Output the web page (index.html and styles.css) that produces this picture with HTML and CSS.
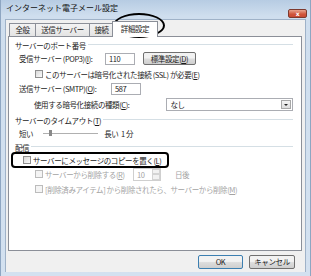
FILE: index.html
```html
<!DOCTYPE html>
<html lang="ja">
<head>
    <meta charset="UTF-8">
    <title>インターネット電子メール設定</title>
    <link rel="stylesheet" href="styles.css">
</head>
<body>
    <div class="window">
        <div class="titlebar">
            <span class="title">インターネット電子メール設定</span>
            <span class="close">x</span>
        </div>
        <div class="client">
            <div class="tabs">
                <div class="tab tab-general">全般</div>
                <div class="tab tab-send">送信サーバー</div>
                <div class="tab tab-conn">接続</div>
                <div class="tab active">詳細設定</div>
            </div>
            <div class="panel">
                <div class="group">
                    <span>サーバーのポート番号</span>
                    <span class="line"></span>
                </div>
                <div class="row row-port">
                    <span class="label label-pop">受信サーバー (POP3)(<u>I</u>):</span>
                    <span class="input">110</span>
                    <span class="button btn-default">標準設定(<u>D</u>)</span>
                </div>
                <div class="row row-check row-ssl">
                    <span class="check"></span>
                    <span>このサーバーは暗号化された接続 (SSL) が必要(<u>E</u>)</span>
                </div>
                <div class="row row-port row-smtp">
                    <span class="label label-smtp">送信サーバー (SMTP)(<u>O</u>):</span>
                    <span class="input">587</span>
                </div>
                <div class="row row-enc">
                    <span class="label label-enc">使用する暗号化接続の種類(<u>C</u>):</span>
                    <span class="select">なし<span class="drop"></span></span>
                </div>
                <div class="group group-mid">
                    <span>サーバーのタイムアウト(<u>T</u>)</span>
                    <span class="line"></span>
                </div>
                <div class="row row-slider">
                    <span>短い</span>
                    <span class="slider"><span class="thumb"></span></span>
                    <span>長い&nbsp;&nbsp;1 分</span>
                </div>
                <div class="group group-mid">
                    <span>配信</span>
                    <span class="line"></span>
                </div>
                <div class="row circled">
                    <span class="check"></span>
                    <span>サーバーにメッセージのコピーを置く(<u>L</u>)</span>
                </div>
                <div class="row row-check disabled">
                    <span class="check"></span>
                    <span class="label-del">サーバーから削除する(<u>R</u>)</span>
                    <span class="spin">10<span class="spin-btns"><span></span><span></span></span></span>
                    <span class="days">日後</span>
                </div>
                <div class="row row-check row-last disabled">
                    <span class="check"></span>
                    <span>[削除済みアイテム] から削除されたら、サーバーから削除(<u>M</u>)</span>
                </div>
            </div>
            <div class="buttons">
                <span class="button btn-ok">OK</span>
                <span class="button btn-cancel">キャンセル</span>
            </div>
        </div>
        <div class="ellipse"></div>
    </div>
</body>
</html>
```

FILE: styles.css
```css
* {
    box-sizing: border-box;
}
body {
    margin: 0;
    font-family: "Noto Sans CJK JP", "Noto Sans", sans-serif;
    font-size: 7.5px;
    letter-spacing: -0.4px;
    color: #1a1a1a;
}
u {
    text-decoration: underline;
}
.window {
    position: relative;
    width: 311px;
    height: 276px;
    background: linear-gradient(#b7cce3, #cfdeee 16px, #d3e1f0);
    border-left: 1px solid #8ea6c2;
    border-right: 1px solid #8ea6c2;
    padding: 0 4px 4px;
    display: flex;
    flex-direction: column;
}
.titlebar {
    height: 19px;
    display: flex;
    justify-content: space-between;
}
.title {
    font-size: 8px;
    letter-spacing: 0;
    line-height: 16px;
    margin-left: 1px;
    color: #111;
}
.close {
    width: 19px;
    height: 9px;
    margin-top: 9px;
    margin-right: -1px;
    border: 1px solid #7d3a2e;
    border-radius: 2px;
    background: linear-gradient(#e8a48f, #d0543a 60%, #c84a33);
    color: #fff;
    font-family: "DejaVu Sans", sans-serif;
    font-size: 6px;
    font-weight: bold;
    line-height: 7px;
    text-align: center;
}
.client {
    flex: 1;
    background: #f0f0f0;
    padding: 3px 3px 0 2px;
    display: flex;
    flex-direction: column;
    border: 1px solid #9fb2c8;
    border-bottom: none;
}
.tabs {
    display: flex;
    align-items: flex-end;
    height: 13px;
    padding-left: 1px;
}
.tab {
    height: 13px;
    margin-left: -1px;
    border: 1px solid #8b8f98;
    border-bottom: none;
    background: linear-gradient(#f3f3f3, #e4e4e4);
    line-height: 12px;
    text-align: center;
}
.tab-general {
    margin-left: 0;
    width: 27px;
}
.tab-send {
    width: 55px;
}
.tab-conn {
    width: 25px;
}
.tab.active {
    width: 46px;
    height: 16px;
    margin: 0 0 -1px -2px;
    position: relative;
    background: #fff;
    line-height: 14px;
    z-index: 1;
}
.panel {
    height: 215px;
    background: #fff;
    border: 1px solid #8b8f98;
    padding: 3px 8px 0 6px;
}
.group {
    display: flex;
    align-items: center;
    height: 10px;
}
.group-mid {
    margin-top: 4px;
}
.line {
    flex: 1;
    margin-left: 2px;
    border-top: 1px solid #d5dfe5;
    border-bottom: 1px solid #fff;
}
.row {
    display: flex;
    align-items: center;
    height: 12px;
    padding-left: 4px;
}
.row-port {
    height: 13px;
    margin-top: 2px;
}
.row-check {
    padding-left: 20px;
}
.row-ssl {
    margin-top: 3px;
}
.row-smtp {
    margin-top: 2px;
}
.row-enc {
    height: 13px;
    margin-top: 3px;
    padding-left: 19px;
}
.label-pop {
    width: 86px;
}
.label-smtp {
    width: 92px;
}
.label-enc {
    width: 135px;
}
.input {
    width: 30px;
    height: 12px;
    border: 1px solid #abadb3;
    padding-left: 3px;
    line-height: 10px;
}
.button {
    height: 13px;
    border: 1px solid #707070;
    border-radius: 2px;
    background: linear-gradient(#f2f2f2 45%, #dcdcdc 55%, #cfcfcf);
    text-align: center;
    line-height: 11px;
}
.btn-default {
    width: 53px;
    margin-left: 8px;
}
.check {
    width: 8px;
    height: 8px;
    margin-right: 2px;
    border: 1px solid #8f8f8f;
    background: linear-gradient(135deg, #d8d8d8, #fbfbfb);
    flex-shrink: 0;
}
.select {
    position: relative;
    width: 129px;
    height: 13px;
    border: 1px solid #abadb3;
    padding-left: 3px;
    line-height: 11px;
}
.drop {
    position: absolute;
    right: 1px;
    top: 1px;
    width: 10px;
    height: 9px;
    border: 1px solid #a7a7a7;
    background: linear-gradient(#f4f4f4, #dcdcdc);
}
.drop::after {
    content: "";
    position: absolute;
    left: 2px;
    top: 3px;
    border-left: 2px solid transparent;
    border-right: 2px solid transparent;
    border-top: 2px solid #222;
}
.row-slider {
    height: 10px;
    margin-top: 3px;
}
.slider {
    position: relative;
    width: 55px;
    height: 1px;
    margin: 0 6px 0 10px;
    background: #b0b0b0;
}
.thumb {
    position: absolute;
    left: 6px;
    top: -3px;
    width: 3px;
    height: 6px;
    background: #8a8a8a;
}
.circled {
    width: 158px;
    height: 16px;
    margin-left: -4px;
    padding-left: 10px;
    border: 2px solid #000;
    border-radius: 4px;
}
.disabled {
    color: #a3a3a3;
}
.disabled .check {
    border-color: #bcbcbc;
    background: #f4f4f4;
}
.label-del {
    width: 86px;
}
.spin {
    position: relative;
    width: 28px;
    height: 13px;
    margin-left: 2px;
    border: 1px solid #cfcfcf;
    padding-left: 3px;
    line-height: 11px;
}
.spin-btns {
    position: absolute;
    right: 0;
    top: 0;
    width: 8px;
    height: 11px;
    display: flex;
    flex-direction: column;
}
.spin-btns span {
    flex: 1;
    border: 1px solid #d4d4d4;
    background: #f2f2f2;
}
.days {
    margin-left: 14px;
}
.row-last {
    margin-top: 3px;
}
.buttons {
    display: flex;
    justify-content: flex-end;
    gap: 6px;
    padding: 4px 7px 0 0;
}
.btn-ok {
    width: 45px;
    height: 14px;
    border-color: #3c7fb1;
    line-height: 12px;
}
.btn-cancel {
    width: 46px;
    height: 14px;
    line-height: 12px;
}
.ellipse {
    position: absolute;
    left: 112px;
    top: 13px;
    width: 52px;
    height: 25px;
    border: 2px solid #000;
    border-radius: 50%;
}
```
